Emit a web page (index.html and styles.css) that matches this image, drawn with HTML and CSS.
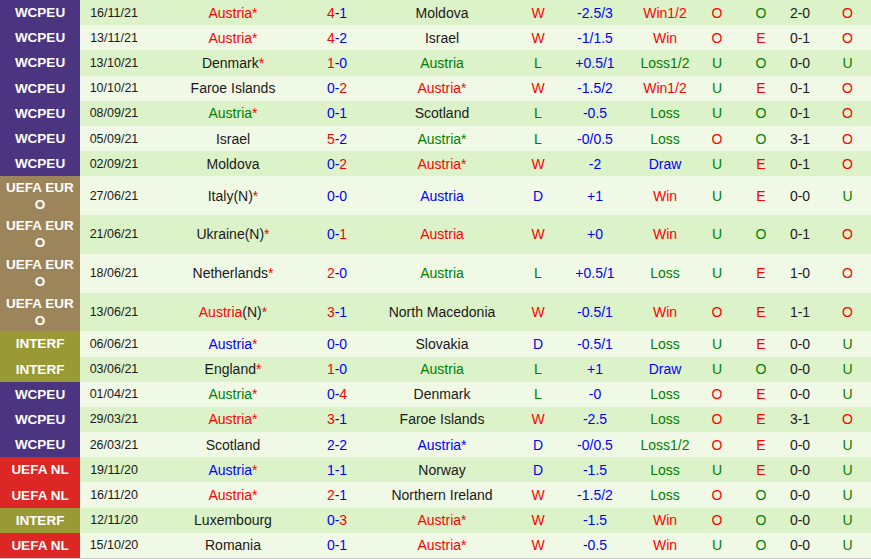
FILE: index.html
```html
<!DOCTYPE html>
<html>
<head>
<meta charset="utf-8">
<link rel="stylesheet" href="styles.css">
</head>
<body>
<div class="tbl">
  <div class="row dk"><div class="comp wc">WCPEU</div><div class="c date">16/11/21</div><div class="c"><span class="r">Austria</span><span class="r">*</span></div><div class="c"><span class="r">4</span><span class="b">-1</span></div><div class="c">Moldova</div><div class="c r">W</div><div class="c b">-2.5/3</div><div class="c r">Win1/2</div><div class="c r">O</div><div class="c g">O</div><div class="c">2-0</div><div class="c r">O</div></div>
  <div class="row lt"><div class="comp wc">WCPEU</div><div class="c date">13/11/21</div><div class="c"><span class="r">Austria</span><span class="r">*</span></div><div class="c"><span class="r">4</span><span class="b">-2</span></div><div class="c">Israel</div><div class="c r">W</div><div class="c b">-1/1.5</div><div class="c r">Win</div><div class="c r">O</div><div class="c r">E</div><div class="c">0-1</div><div class="c r">O</div></div>
  <div class="row dk"><div class="comp wc">WCPEU</div><div class="c date">13/10/21</div><div class="c"><span>Denmark</span><span class="r">*</span></div><div class="c"><span class="r">1</span><span class="b">-0</span></div><div class="c g">Austria</div><div class="c g">L</div><div class="c b">+0.5/1</div><div class="c g">Loss1/2</div><div class="c g">U</div><div class="c g">O</div><div class="c">0-0</div><div class="c g">U</div></div>
  <div class="row lt"><div class="comp wc">WCPEU</div><div class="c date">10/10/21</div><div class="c">Faroe Islands</div><div class="c"><span class="b">0-</span><span class="r">2</span></div><div class="c r">Austria*</div><div class="c r">W</div><div class="c b">-1.5/2</div><div class="c r">Win1/2</div><div class="c g">U</div><div class="c r">E</div><div class="c">0-1</div><div class="c r">O</div></div>
  <div class="row dk"><div class="comp wc">WCPEU</div><div class="c date">08/09/21</div><div class="c"><span class="g">Austria</span><span class="r">*</span></div><div class="c b">0-1</div><div class="c">Scotland</div><div class="c g">L</div><div class="c b">-0.5</div><div class="c g">Loss</div><div class="c g">U</div><div class="c g">O</div><div class="c">0-1</div><div class="c r">O</div></div>
  <div class="row lt"><div class="comp wc">WCPEU</div><div class="c date">05/09/21</div><div class="c">Israel</div><div class="c"><span class="r">5</span><span class="b">-2</span></div><div class="c g">Austria*</div><div class="c g">L</div><div class="c b">-0/0.5</div><div class="c g">Loss</div><div class="c r">O</div><div class="c g">O</div><div class="c">3-1</div><div class="c r">O</div></div>
  <div class="row dk"><div class="comp wc">WCPEU</div><div class="c date">02/09/21</div><div class="c">Moldova</div><div class="c"><span class="b">0-</span><span class="r">2</span></div><div class="c r">Austria*</div><div class="c r">W</div><div class="c b">-2</div><div class="c b">Draw</div><div class="c g">U</div><div class="c r">E</div><div class="c">0-1</div><div class="c r">O</div></div>
  <div class="row lt tall"><div class="comp eu">UEFA EURO</div><div class="c date">27/06/21</div><div class="c"><span>Italy(N)</span><span class="r">*</span></div><div class="c b">0-0</div><div class="c b">Austria</div><div class="c b">D</div><div class="c b">+1</div><div class="c r">Win</div><div class="c g">U</div><div class="c r">E</div><div class="c">0-0</div><div class="c g">U</div></div>
  <div class="row dk tall"><div class="comp eu">UEFA EURO</div><div class="c date">21/06/21</div><div class="c"><span>Ukraine(N)</span><span class="r">*</span></div><div class="c"><span class="b">0-</span><span class="r">1</span></div><div class="c r">Austria</div><div class="c r">W</div><div class="c b">+0</div><div class="c r">Win</div><div class="c g">U</div><div class="c g">O</div><div class="c">0-1</div><div class="c r">O</div></div>
  <div class="row lt tall"><div class="comp eu">UEFA EURO</div><div class="c date">18/06/21</div><div class="c"><span>Netherlands</span><span class="r">*</span></div><div class="c"><span class="r">2</span><span class="b">-0</span></div><div class="c g">Austria</div><div class="c g">L</div><div class="c b">+0.5/1</div><div class="c g">Loss</div><div class="c g">U</div><div class="c r">E</div><div class="c">1-0</div><div class="c r">O</div></div>
  <div class="row dk tall"><div class="comp eu">UEFA EURO</div><div class="c date">13/06/21</div><div class="c"><span class="r">Austria</span><span>(N)</span><span class="r">*</span></div><div class="c"><span class="r">3</span><span class="b">-1</span></div><div class="c">North Macedonia</div><div class="c r">W</div><div class="c b">-0.5/1</div><div class="c r">Win</div><div class="c r">O</div><div class="c r">E</div><div class="c">1-1</div><div class="c r">O</div></div>
  <div class="row lt"><div class="comp it">INTERF</div><div class="c date">06/06/21</div><div class="c"><span class="b">Austria</span><span class="r">*</span></div><div class="c b">0-0</div><div class="c">Slovakia</div><div class="c b">D</div><div class="c b">-0.5/1</div><div class="c g">Loss</div><div class="c g">U</div><div class="c r">E</div><div class="c">0-0</div><div class="c g">U</div></div>
  <div class="row dk"><div class="comp it">INTERF</div><div class="c date">03/06/21</div><div class="c"><span>England</span><span class="r">*</span></div><div class="c"><span class="r">1</span><span class="b">-0</span></div><div class="c g">Austria</div><div class="c g">L</div><div class="c b">+1</div><div class="c b">Draw</div><div class="c g">U</div><div class="c g">O</div><div class="c">0-0</div><div class="c g">U</div></div>
  <div class="row lt"><div class="comp wc">WCPEU</div><div class="c date">01/04/21</div><div class="c"><span class="g">Austria</span><span class="r">*</span></div><div class="c"><span class="b">0-</span><span class="r">4</span></div><div class="c">Denmark</div><div class="c g">L</div><div class="c b">-0</div><div class="c g">Loss</div><div class="c r">O</div><div class="c r">E</div><div class="c">0-0</div><div class="c g">U</div></div>
  <div class="row dk"><div class="comp wc">WCPEU</div><div class="c date">29/03/21</div><div class="c"><span class="r">Austria</span><span class="r">*</span></div><div class="c"><span class="r">3</span><span class="b">-1</span></div><div class="c">Faroe Islands</div><div class="c r">W</div><div class="c b">-2.5</div><div class="c g">Loss</div><div class="c r">O</div><div class="c r">E</div><div class="c">3-1</div><div class="c r">O</div></div>
  <div class="row lt"><div class="comp wc">WCPEU</div><div class="c date">26/03/21</div><div class="c">Scotland</div><div class="c b">2-2</div><div class="c b">Austria*</div><div class="c b">D</div><div class="c b">-0/0.5</div><div class="c g">Loss1/2</div><div class="c r">O</div><div class="c r">E</div><div class="c">0-0</div><div class="c g">U</div></div>
  <div class="row dk"><div class="comp nl">UEFA NL</div><div class="c date">19/11/20</div><div class="c"><span class="b">Austria</span><span class="r">*</span></div><div class="c b">1-1</div><div class="c">Norway</div><div class="c b">D</div><div class="c b">-1.5</div><div class="c g">Loss</div><div class="c g">U</div><div class="c r">E</div><div class="c">0-0</div><div class="c g">U</div></div>
  <div class="row lt"><div class="comp nl">UEFA NL</div><div class="c date">16/11/20</div><div class="c"><span class="r">Austria</span><span class="r">*</span></div><div class="c"><span class="r">2</span><span class="b">-1</span></div><div class="c">Northern Ireland</div><div class="c r">W</div><div class="c b">-1.5/2</div><div class="c g">Loss</div><div class="c r">O</div><div class="c g">O</div><div class="c">0-0</div><div class="c g">U</div></div>
  <div class="row dk"><div class="comp it">INTERF</div><div class="c date">12/11/20</div><div class="c">Luxembourg</div><div class="c"><span class="b">0-</span><span class="r">3</span></div><div class="c r">Austria*</div><div class="c r">W</div><div class="c b">-1.5</div><div class="c r">Win</div><div class="c r">O</div><div class="c g">O</div><div class="c">0-0</div><div class="c g">U</div></div>
  <div class="row lt"><div class="comp nl">UEFA NL</div><div class="c date">15/10/20</div><div class="c">Romania</div><div class="c b">0-1</div><div class="c r">Austria*</div><div class="c r">W</div><div class="c b">-0.5</div><div class="c r">Win</div><div class="c g">U</div><div class="c g">O</div><div class="c">0-0</div><div class="c g">U</div></div>
</div>
</body>
</html>
```
FILE: styles.css
```css
html, body {
  margin: 0;
  padding: 0;
  background: #ffffff;
}
.tbl {
  width: 871px;
  font-family: "Liberation Sans", Arial, sans-serif;
  font-size: 14px;
  color: #1a1a1a;
  border-bottom: 1px solid #c9c9c9;
}
.row {
  display: grid;
  grid-template-columns: 80px 68px 170px 38px 172px 20px 94px 46px 58px 30px 48px 47px;
  height: 25.2px;
}
.row.tall {
  height: 38.75px;
}
.dk { background: #dcf2c8; }
.lt { background: #f0f9e6; }
.c {
  display: flex;
  align-items: center;
  justify-content: center;
  white-space: nowrap;
}
.date {
  font-size: 12.5px;
}
.comp {
  display: flex;
  align-items: center;
  justify-content: center;
  text-align: center;
  color: #ffffff;
  font-weight: bold;
  font-size: 13.5px;
  line-height: 17px;
  padding: 0 3px;
  word-break: break-all;
}
.wc { background: #4b3480; }
.eu { background: #9d855b; }
.it { background: #999a36; }
.nl { background: #dc2724; }
.r { color: #ff0000; }
.g { color: #008000; }
.b { color: #0000ff; }
```
